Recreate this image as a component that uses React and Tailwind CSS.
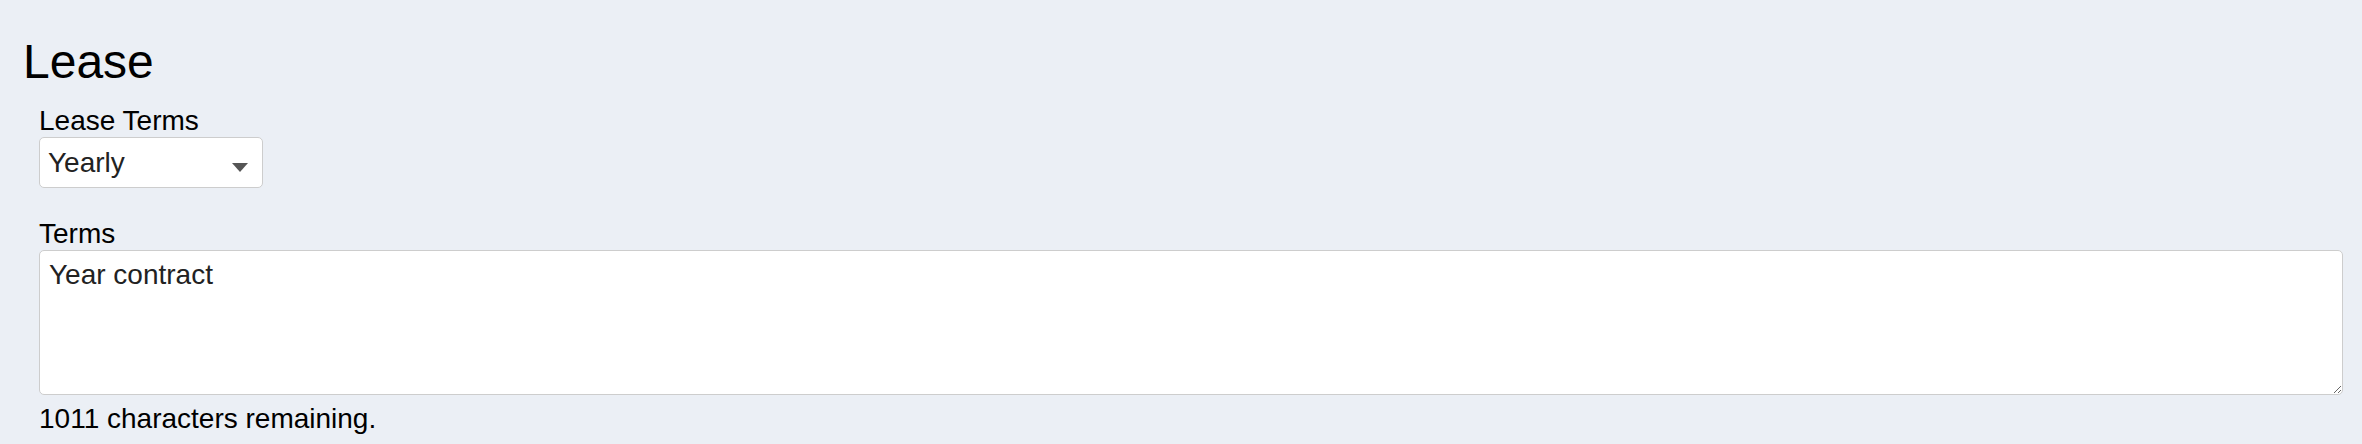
import React from "react";

export default function App() {
  const font = { fontFamily: '"Liberation Sans", Arial, Helvetica, sans-serif' };
  return (
    <div
      className="w-[2362px] h-[444px] bg-[#ebeff5] overflow-hidden text-black pt-[36px] pl-[23px] pr-[19px]"
      style={font}
    >
      <h1 className="text-[48px] leading-[52px] font-normal">Lease</h1>
      <div className="pl-[16px] mt-[17px]">
        <label className="block text-[28px] leading-[31px] mb-[1px]">Lease Terms</label>
        <div className="relative w-[224px] h-[51px]">
          <select
            defaultValue="Yearly"
            className="appearance-none w-full h-full bg-white border border-[#cdcdcd] rounded-[5px] pl-[8px] pr-[40px] text-[28px] text-[#222] outline-none"
            style={font}
          >
            <option>Yearly</option>
            <option>Monthly</option>
          </select>
          <svg
            className="absolute right-[15px] top-[26px] pointer-events-none"
            width="16"
            height="9"
            viewBox="0 0 16 9"
          >
            <path d="M0 0 H16 L8 9 Z" fill="#555" />
          </svg>
        </div>
        <label className="block text-[28px] leading-[31px] mt-[30px] mb-[1px]">Terms</label>
        <textarea
          defaultValue="Year contract"
          className="block w-full h-[145px] bg-white border border-[#cdcdcd] rounded-[5px] pt-[8px] pl-[9px] text-[28px] leading-[31px] text-[#222] outline-none"
          style={font}
        />
        <p className="text-[28px] leading-[31px] mt-[8px]">1011 characters remaining.</p>
      </div>
    </div>
  );
}
